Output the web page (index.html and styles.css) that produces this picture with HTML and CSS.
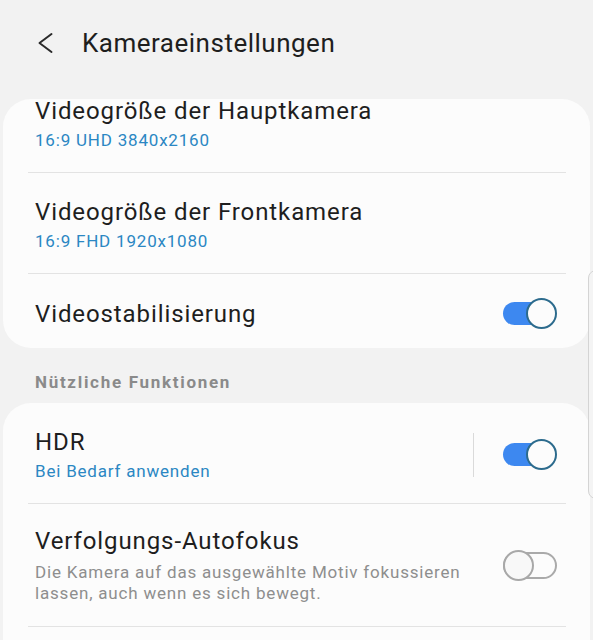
FILE: index.html
```html
<!DOCTYPE html>
<html lang="de">
<head>
    <meta charset="UTF-8">
    <meta name="viewport" content="width=device-width, initial-scale=1.0">
    <title>Kameraeinstellungen</title>
    <link rel="stylesheet" href="styles.css">
</head>
<body>
    <div class="screen">
        <header class="topbar">
            <svg class="back" width="20" height="24" viewBox="0 0 20 24">
                <path d="M16.5 3 L4.5 12 L16.5 21" fill="none" stroke="#2a2a2a" stroke-width="2" stroke-linecap="round" stroke-linejoin="round"/>
            </svg>
            <h1>Kameraeinstellungen</h1>
        </header>

        <section class="card">
            <div class="row row-cut">
                <div class="row-text">
                    <div class="row-title">Videogröße der Hauptkamera</div>
                    <div class="row-sub">16:9 UHD 3840x2160</div>
                </div>
            </div>
            <div class="row">
                <div class="row-text">
                    <div class="row-title">Videogröße der Frontkamera</div>
                    <div class="row-sub">16:9 FHD 1920x1080</div>
                </div>
            </div>
            <div class="row row-single">
                <div class="row-text">
                    <div class="row-title">Videostabilisierung</div>
                </div>
                <div class="toggle on"></div>
            </div>
        </section>

        <h2 class="group-title">Nützliche Funktionen</h2>

        <section class="card card-open">
            <div class="row">
                <div class="row-text">
                    <div class="row-title">HDR</div>
                    <div class="row-sub">Bei Bedarf anwenden</div>
                </div>
                <div class="split"></div>
                <div class="toggle on"></div>
            </div>
            <div class="row row-desc">
                <div class="row-text">
                    <div class="row-title">Verfolgungs-Autofokus</div>
                    <div class="row-info">Die Kamera auf das ausgewählte Motiv fokussieren lassen, auch wenn es sich bewegt.</div>
                </div>
                <div class="toggle"></div>
            </div>
            <div class="row row-empty"></div>
        </section>

        <div class="edge-handle"></div>
    </div>
</body>
</html>
```

FILE: styles.css
```css
body {
    margin: 0;
    padding: 0;
    background: #f2f2f2;
    font-family: Roboto, "Noto Sans", sans-serif;
    color: #1e1e1e;
}

.screen {
    position: relative;
    width: 593px;
    height: 640px;
    overflow: hidden;
}

/* Top bar */
.topbar {
    display: flex;
    align-items: flex-start;
    height: 99px;
    padding: 28px 0 0 35px;
    box-sizing: border-box;
}

.back {
    margin-top: 3px;
    margin-right: 27px;
}

.topbar h1 {
    margin: 0;
    font-size: 26px;
    font-weight: 400;
    line-height: 30px;
    letter-spacing: 0.5px;
    color: #1e1e1e;
}

/* Cards */
.card {
    background: #fcfcfc;
    margin: 0 3px;
    border-radius: 28px;
}

.card-open {
    border-bottom-left-radius: 0;
    border-bottom-right-radius: 0;
    min-height: 260px;
}

.row {
    display: flex;
    align-items: center;
    margin: 0 24px 0 25px;
    padding: 24px 9px 21px 7px;
    border-bottom: 1px solid #e3e3e3;
}

.row:last-child {
    border-bottom: none;
}

/* first row is scrolled half under the card edge */
.row-cut {
    padding-top: 0;
}

.row-cut .row-title {
    line-height: 24px;
}

.row-cut .row-sub {
    margin-top: 6px;
}

.row-single {
    padding-top: 24px;
    padding-bottom: 19px;
}

.row-desc {
    padding-top: 22px;
    padding-bottom: 22px;
}

.row-empty {
    height: 20px;
}

.row-text {
    flex: 1;
}

.row-title {
    font-size: 24px;
    line-height: 30px;
    letter-spacing: 0.9px;
    color: #1e1e1e;
}

.row-sub {
    margin-top: 3px;
    font-size: 17px;
    line-height: 22px;
    letter-spacing: 0.8px;
    color: #2b87c3;
}

.row-info {
    margin-top: 6px;
    max-width: 440px;
    font-size: 17px;
    line-height: 21px;
    letter-spacing: 0.8px;
    color: #8e8e8e;
}

.split {
    width: 1px;
    height: 44px;
    background: #dadada;
    margin-right: 29px;
}

.group-title {
    margin: 23px 0 10px 35px;
    font-size: 17px;
    font-weight: 700;
    line-height: 22px;
    letter-spacing: 1.7px;
    color: #8a8a8a;
}

/* Switches */
.toggle {
    position: relative;
    flex: none;
    width: 54px;
    height: 31px;
}

.toggle::before {
    content: "";
    position: absolute;
    left: 0;
    top: 2px;
    width: 50px;
    height: 23px;
    border: 2px solid #aaaaaa;
    border-radius: 14px;
}

.toggle::after {
    content: "";
    position: absolute;
    left: 0;
    top: 0;
    width: 27px;
    height: 27px;
    border: 2px solid #a8a8a8;
    border-radius: 50%;
    background: #f8f8f8;
}

.toggle.on::before {
    top: 4px;
    width: 40px;
    height: 23px;
    border: none;
    background: #3d88f0;
}

.toggle.on::after {
    left: auto;
    right: 0;
    border-color: #2c6b8d;
    background: #fcfcfc;
}

/* Edge panel handle */
.edge-handle {
    position: absolute;
    left: 588px;
    top: 270px;
    width: 20px;
    height: 227px;
    border: 1px solid #d4d4d4;
    border-radius: 8px;
    background: #f4f4f4;
}
```
